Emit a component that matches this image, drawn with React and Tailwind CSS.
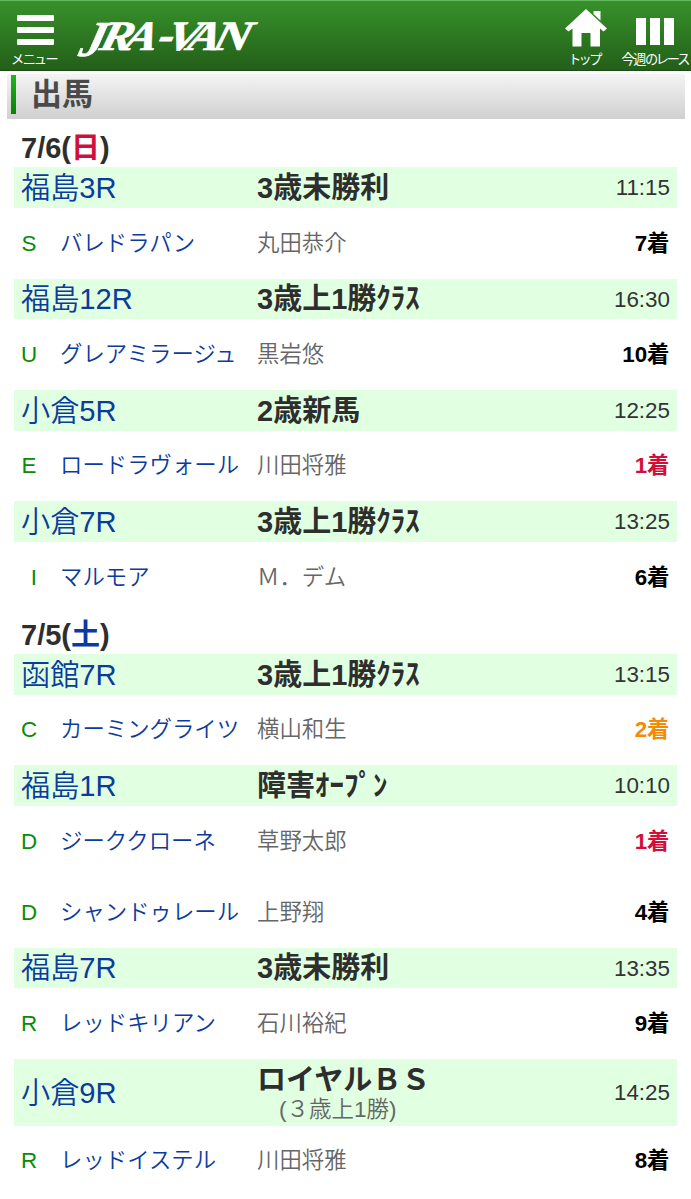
const DAYS = [
  {
    date: "7/6", day: "日", dayColor: "text-[#d0103a]",
    races: [
      { place: "福島3R", name: "3歳未勝利", time: "11:15", horses: [["S", "バレドラパン", "丸田恭介", 7]] },
      { place: "福島12R", name: "3歳上1勝ｸﾗｽ", time: "16:30", horses: [["U", "グレアミラージュ", "黒岩悠", 10]] },
      { place: "小倉5R", name: "2歳新馬", time: "12:25", horses: [["E", "ロードラヴォール", "川田将雅", 1]] },
      { place: "小倉7R", name: "3歳上1勝ｸﾗｽ", time: "13:25", horses: [["I", "マルモア", "Ｍ．デム", 6]] },
    ],
  },
  {
    date: "7/5", day: "土", dayColor: "text-[#0b3b9c]",
    races: [
      { place: "函館7R", name: "3歳上1勝ｸﾗｽ", time: "13:15", horses: [["C", "カーミングライツ", "横山和生", 2]] },
      { place: "福島1R", name: "障害ｵｰﾌﾟﾝ", time: "10:10", horses: [["D", "ジーククローネ", "草野太郎", 1], ["D", "シャンドゥレール", "上野翔", 4]] },
      { place: "福島7R", name: "3歳未勝利", time: "13:35", horses: [["R", "レッドキリアン", "石川裕紀", 9]] },
      { place: "小倉9R", name: "ロイヤルＢＳ", note: "(３歳上1勝)", time: "14:25", horses: [["R", "レッドイステル", "川田将雅", 8]] },
    ],
  },
];

const RANK_COLOR = { 1: "text-[#d0103a]", 2: "text-[#f58a07]" };

function Logo() {
  return (
    <svg className="mt-[14px] ml-[4px] h-[50px] w-[190px] overflow-visible" viewBox="0 0 190 50" fill="white">
      <g transform="translate(0 35) skewX(-15)" fontSize="42" stroke="white" strokeWidth="0.6" className="font-['Liberation_Serif',serif] font-bold italic">
        <text transform="translate(5 6) scale(1 1.03)" fontSize="49">J</text>
        <text transform="translate(24 0) scale(1.18 1)">R</text>
        <text transform="translate(49 0) scale(1.15 1)">A</text>
        <text transform="translate(82 0) scale(1.1 1.1)">-</text>
        <text transform="translate(90 0) scale(1.2 1)">V</text>
        <text transform="translate(112 0) scale(1.15 1)">A</text>
        <text transform="translate(137 0) scale(1.25 1)">N</text>
      </g>
    </svg>
  );
}

function Header() {
  return (
    <header className="flex h-[71px] shrink-0 items-start border-t border-[#62b85a] border-b border-b-[#1d4a17] bg-linear-to-b from-[#37922a] to-[#235f19] text-[13.2px] leading-[16px] text-white [font-feature-settings:'palt']">
      <div className="flex w-[70px] flex-col items-center">
        <div className="mt-[14px] flex w-[37px] flex-col gap-[6px]">
          <div className="h-[6px] rounded-[1px] bg-white" />
          <div className="h-[6px] rounded-[1px] bg-white" />
          <div className="h-[6px] rounded-[1px] bg-white" />
        </div>
        <span className="mt-[7px] tracking-[-0.4px] whitespace-nowrap">メニュー</span>
      </div>
      <Logo />
      <div className="ml-auto flex w-[66px] flex-col items-center">
        <svg className="mt-[8px] h-[38px] w-[42px]" viewBox="0 0 42 38" fill="white">
          <path d="M21 0 L42 19.500 L38.500 22.500 L35 19.500 V37.500 H25.500 V24 H16.500 V37.500 H7.500 V19.500 L3.500 22.500 L0 19.500 Z M28.500 2 H35.500 V11.500 L28.500 5 Z" />
        </svg>
        <span className="mt-[5px] tracking-[-0.4px] whitespace-nowrap">トップ</span>
      </div>
      <div className="flex w-[72px] flex-col items-center">
        <div className="mt-[17px] flex gap-[4px]">
          <div className="h-[27px] w-[10px] bg-white" />
          <div className="h-[27px] w-[10px] bg-white" />
          <div className="h-[27px] w-[10px] bg-white" />
        </div>
        <span className="mt-[7px] tracking-[-1.3px] whitespace-nowrap">今週のレース</span>
      </div>
    </header>
  );
}

function Race({ race }) {
  return (
    <section>
      <div className={`flex items-center bg-[#e1ffe1] pr-[7px] pl-[7px] ${race.note ? "h-[66.6px]" : "h-[40.6px]"}`}>
        <div className="w-[236px] pt-px text-[29.2px] leading-[40px] font-[350] text-[#0b3b9c]">{race.place}</div>
        <div className="flex-1 pt-px whitespace-nowrap text-[#2e2e2e]">
          <div className={`text-[29px] font-bold ${race.note ? "leading-[34px]" : "leading-[40px]"}`}>{race.name}</div>
          {race.note && <div className="pl-[22px] text-[22.5px] leading-[26px] font-[350] text-[#666]">{race.note}</div>}
        </div>
        <div className="pt-px text-[22.4px] text-[#333]">{race.time}</div>
      </div>
      {race.horses.map(([mark, horse, jockey, rank]) => (
        <div key={horse} className="flex h-[70.8px] items-center px-[7px] pt-px text-[22.4px] leading-[32px]">
          <div className={mark === "I" ? "w-[16px] text-right text-[#078c07]" : "w-[16px] text-center text-[#078c07]"}>
            {mark}
          </div>
          <div className="w-[220px] pl-[23px] font-[350] whitespace-nowrap text-[#0b3b9c]">{horse}</div>
          <div className="flex-1 font-[350] text-[#666]">{jockey}</div>
          <div className={`pr-[0.5px] font-bold ${RANK_COLOR[rank] || "text-black"}`}>{rank}着</div>
        </div>
      ))}
    </section>
  );
}

export default function App() {
  return (
    <div className="flex h-[1199px] w-[691px] flex-col overflow-hidden bg-white font-['Liberation_Sans','Noto_Sans_CJK_JP',sans-serif]">
      <Header />
      <div className="mt-[3px] mr-[6px] ml-[7px] flex h-[45px] shrink-0 items-start bg-linear-to-b from-[#f4f4f4] to-[#d0d0d0] pl-[4px]">
        <div className="mt-[1px] h-[39px] w-[5px] bg-linear-to-b from-[#20b51c] to-[#088208]" />
        <h1 className="ml-[15px] text-[31px] leading-[41px] font-bold text-[#4a4a4a]">出馬</h1>
      </div>
      <main className="mt-[7px] mr-[14px] ml-[14px]">
        {DAYS.map((d) => (
          <div key={d.date}>
            <h2 className="h-[41.2px] pl-[7px] text-[29px] leading-[44px] font-bold text-[#2e2e2e]">
              {d.date}(<span className={d.dayColor}>{d.day}</span>)
            </h2>
            {d.races.map((r) => <Race key={r.place} race={r} />)}
          </div>
        ))}
      </main>
    </div>
  );
}
